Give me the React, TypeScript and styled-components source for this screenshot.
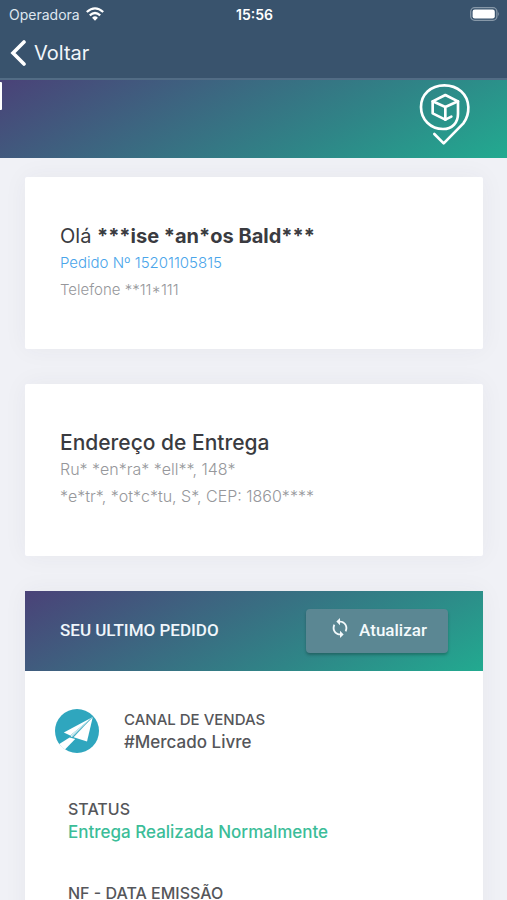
import React from "react";
import styled, { createGlobalStyle } from "styled-components";

const GlobalStyle = createGlobalStyle`
  *, *::before, *::after { box-sizing: border-box; }
  body {
    margin: 0;
    background: #f0f1f6;
    font-family: Inter, "Open Sans", sans-serif;
    color: #3a3b40;
  }
  h1, h2, p, dl, dt, dd { margin: 0; font-weight: 400; }
`;

const brandGradient = "linear-gradient(152deg, #4a4278 0%, #3d6480 33%, #2f8587 66%, #22aa90 100%)";

const Screen = styled.div`
  height: 100vh;
  overflow: hidden;
`;

const TopBar = styled.header`
  background: #39536d;
  border-bottom: 2px solid #526c85;
  color: #fff;
`;

const StatusBar = styled.div`
  display: grid;
  grid-template-columns: 1fr auto 1fr;
  align-items: center;
  height: 28px;
  padding: 0 7px 0 9px;
  font-size: 14px;
`;

const Carrier = styled.span`
  display: flex;
  align-items: center;
  gap: 6px;
  color: #dfe7ef;
`;

const Clock = styled.time`
  font-weight: 600;
`;

const BatteryIcon = styled.svg`
  justify-self: end;
`;

const BackButton = styled.button`
  display: flex;
  align-items: center;
  gap: 8px;
  height: 50px;
  padding: 0 10px;
  border: 0;
  background: none;
  color: #f2f6fa;
  font: 400 20px/24px Inter, sans-serif;
`;

const Banner = styled.div`
  display: flex;
  align-items: flex-start;
  justify-content: space-between;
  height: 78px;
  padding: 2px 36px 0 0;
  background: ${brandGradient};
`;

const MenuHandle = styled.span`
  width: 2px;
  height: 28px;
  border-radius: 0 1px 1px 0;
  background: #fff;
`;

const Content = styled.main`
  display: flex;
  flex-direction: column;
  gap: 35px;
  padding: 19px 24px 0 25px;
`;

const Card = styled.section`
  background: #fff;
  border-radius: 2px;
  box-shadow: 0 0 24px rgba(60, 60, 80, 0.05);
`;

const InfoCard = styled(Card)`
  min-height: 172px;
  padding: 46px 35px;
`;

const Title = styled.h1<{ $medium?: boolean }>`
  && { font-weight: ${(p) => (p.$medium ? 500 : 400)}; }
  font-size: ${(p) => (p.$medium ? 21 : 20)}px;
  line-height: 26px;
  white-space: nowrap;

  strong { font-weight: 700; }
`;

const Line = styled.p<{ $accent?: boolean; $small?: boolean }>`
  && { font-weight: 300; }
  color: ${(p) => (p.$accent ? "#4aa5ea" : "#96979b")};
  font-size: ${(p) => (p.$small ? 15 : 16)}px;
  line-height: 27px;
  white-space: nowrap;
`;

const OrderHeader = styled.div`
  display: flex;
  align-items: center;
  justify-content: space-between;
  height: 80px;
  padding: 0 35px;
  background: ${brandGradient};
`;

const OrderTitle = styled.h2`
  && { font-weight: 500; }
  padding-bottom: 2px;
  color: #f0f6fb;
  font-family: Roboto, sans-serif;
  font-size: 17px;
  line-height: 20px;
`;

const RefreshButton = styled.button`
  display: flex;
  align-items: flex-start;
  justify-content: center;
  gap: 8px;
  width: 142px;
  height: 44px;
  padding: 7px 0 0 2px;
  border: 0;
  border-radius: 4px;
  background: #5b8793;
  box-shadow: 0 2px 3px rgba(0, 0, 0, 0.25);
  color: #f4fafc;
  font: 500 17px/28px Roboto, sans-serif;
`;

const OrderBody = styled.div`
  display: flex;
  flex-direction: column;
  gap: 38px;
  padding: 37px 30px 40px;
`;

const Channel = styled.div`
  display: flex;
  align-items: center;
  gap: 25px;
  padding-bottom: 6px;
`;

const Field = styled.dl<{ $indent?: boolean }>`
  padding-left: ${(p) => (p.$indent ? 13 : 0)}px;
  color: #55565a;
  line-height: 23px;
  white-space: nowrap;

  dt {
    font-size: ${(p) => (p.$indent ? 16 : 15)}px;
    font-weight: 500;
  }
`;

const Value = styled.dd<{ $done?: boolean }>`
  && { font-weight: 500; }
  color: ${(p) => (p.$done ? "#3bbd98" : "inherit")};
  font-size: 17px;
`;

const Wifi = () => (
  <svg width="18" height="14" viewBox="0 0 18 14" fill="none" stroke="#fff" strokeWidth="2.3" aria-hidden="true">
    <path d="M.8 5Q9-2.2 17.2 5" />
    <path d="M3.8 8.3Q9 3.7 14.2 8.3" />
    <path d="M6.1 10.7Q9 8 11.9 10.7L9 13.7Z" fill="#fff" stroke="none" />
  </svg>
);

const Battery = () => (
  <BatteryIcon width="30" height="14" viewBox="0 0 30 14" aria-hidden="true">
    <rect x=".7" y=".7" width="26.2" height="12.6" rx="4" fill="none" stroke="#8798a8" strokeWidth="1.3" />
    <rect x="2.6" y="2.5" width="22.2" height="9" rx="2.2" fill="#fff" />
    <path d="M28.2 4.8Q30 7 28.2 9.2Z" fill="#8798a8" />
  </BatteryIcon>
);

const Chevron = () => (
  <svg width="16" height="26" viewBox="0 0 16 26" fill="none" stroke="#fff" strokeWidth="3.6" aria-hidden="true">
    <path d="M14 2 3 13l11 11" strokeLinecap="round" />
  </svg>
);

const PinLogo = () => (
  <svg
    width="54"
    height="64"
    viewBox="488 250 162 192"
    fill="none"
    stroke="#fff"
    strokeWidth="8"
    strokeLinejoin="round"
    strokeLinecap="round"
    role="img"
    aria-label="Rastreamento"
  >
    <path d="M540 406 568 434 627 374Q643 353 642 325C640 286 610 260 570 260 529 260 500 288 500 325 500 363 529 391 566 391 594 391 611 372 611 345V308L573 289 535 308V344L573 363 591 354" />
    <path d="M535 308 573 325 611 308M573 325V363" />
  </svg>
);

const RefreshIcon = () => (
  <svg width="22" height="24" viewBox="0 0 24 24" fill="currentColor" aria-hidden="true">
    <path d="M12 4V1L8 5l4 4V6c3.31 0 6 2.69 6 6 0 1.01-.25 1.97-.7 2.8l1.46 1.46A7.93 7.93 0 0 0 20 12c0-4.42-3.58-8-8-8zm0 14c-3.31 0-6-2.69-6-6 0-1.01.25-1.97.7-2.8L5.24 7.74A7.93 7.93 0 0 0 4 12c0 4.42 3.58 8 8 8v3l4-4-4-4v3z" />
  </svg>
);

const PlaneBadge = () => (
  <svg width="44" height="44" viewBox="0 0 44 44" aria-hidden="true">
    <circle cx="22" cy="22" r="22" fill="#2fa6be" />
    <path d="M37.8 8 8.8 23.6 15.2 26.4Z" fill="#fff" />
    <path d="M37.8 8 18.6 28.2 32 32.4Z" fill="#fff" />
    <path d="M37.8 8 15.4 26.2 16.4 28.2 18 27.6Z" fill="#d5edf2" />
    <path d="M14.6 28.6 4.3 35Q6.2 38.4 10 40.5L20.2 30Z" fill="#fff" />
    <path d="M37.8 8 17.2 27.4" stroke="#64bdce" strokeWidth=".7" />
  </svg>
);

export default function App() {
  return (
    <Screen>
      <GlobalStyle />
      <TopBar>
        <StatusBar>
          <Carrier>Operadora <Wifi /></Carrier>
          <Clock>15:56</Clock>
          <Battery />
        </StatusBar>
        <BackButton type="button"><Chevron />Voltar</BackButton>
      </TopBar>
      <Banner>
        <MenuHandle />
        <PinLogo />
      </Banner>
      <Content>
        <InfoCard>
          <Title>Olá <strong>***ise *an*os Bald***</strong></Title>
          <Line $accent $small>Pedido Nº 15201105815</Line>
          <Line $small>Telefone **11*111</Line>
        </InfoCard>
        <InfoCard>
          <Title as="h2" $medium>Endereço de Entrega</Title>
          <Line>Ru* *en*ra* *ell**, 148*</Line>
          <Line>*e*tr*, *ot*c*tu, S*, CEP: 1860****</Line>
        </InfoCard>
        <Card>
          <OrderHeader>
            <OrderTitle>SEU ULTIMO PEDIDO</OrderTitle>
            <RefreshButton type="button"><RefreshIcon />Atualizar</RefreshButton>
          </OrderHeader>
          <OrderBody>
            <Channel>
              <PlaneBadge />
              <Field>
                <dt>CANAL DE VENDAS</dt>
                <Value>#Mercado Livre</Value>
              </Field>
            </Channel>
            <Field $indent>
              <dt>STATUS</dt>
              <Value $done>Entrega Realizada Normalmente</Value>
            </Field>
            <Field $indent>
              <dt>NF - DATA EMISSÃO</dt>
            </Field>
          </OrderBody>
        </Card>
      </Content>
    </Screen>
  );
}
